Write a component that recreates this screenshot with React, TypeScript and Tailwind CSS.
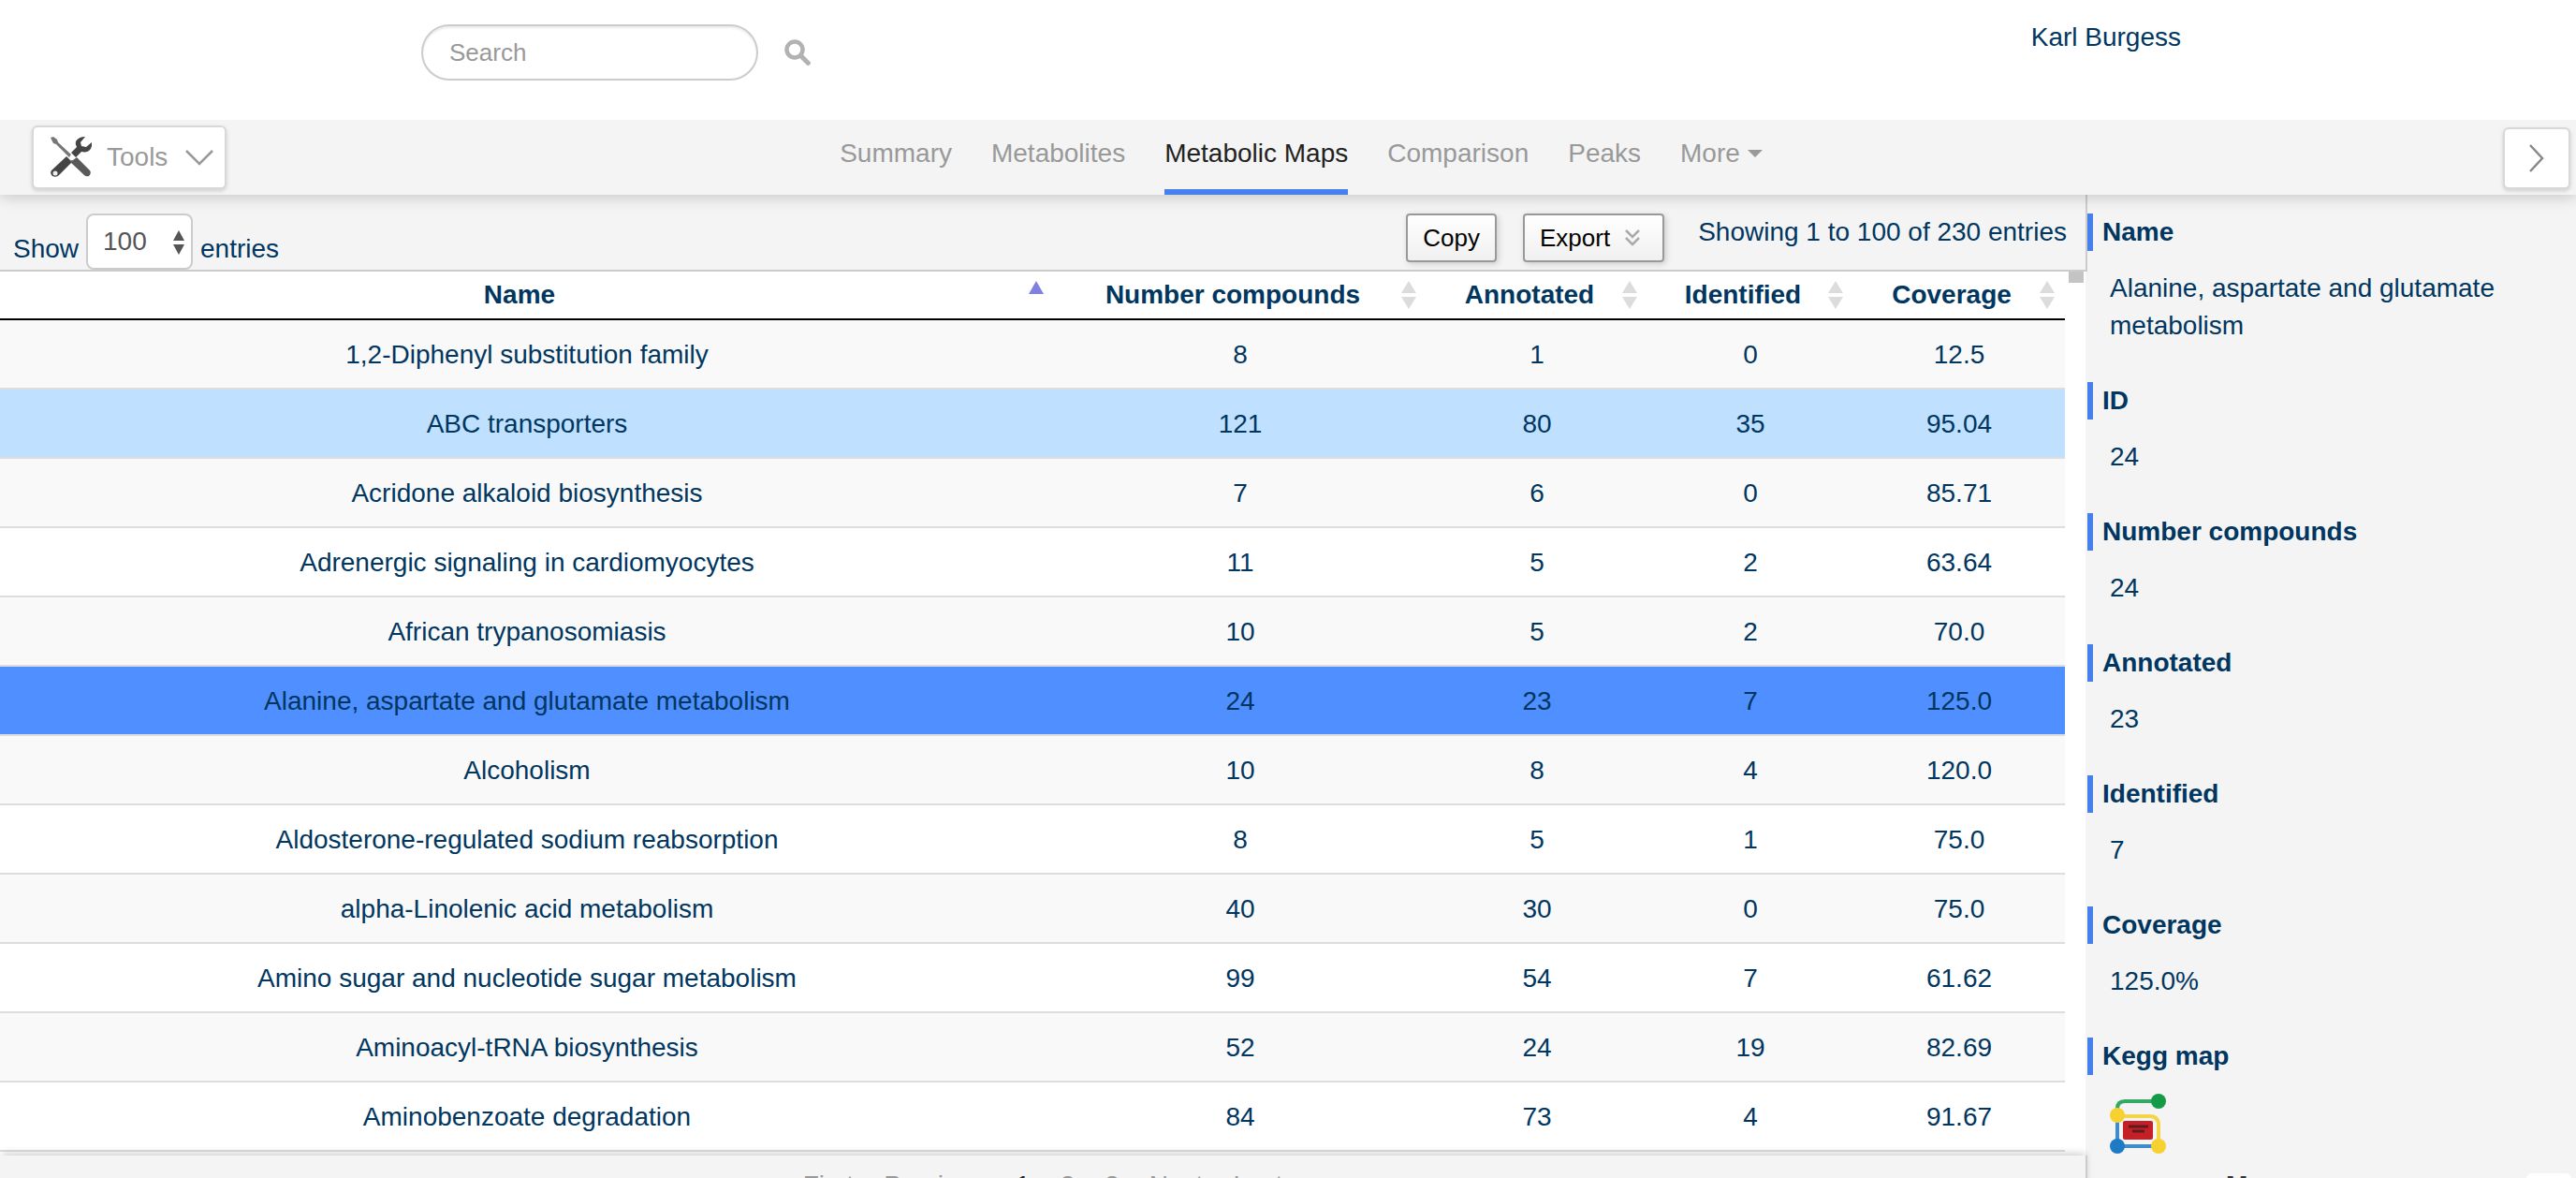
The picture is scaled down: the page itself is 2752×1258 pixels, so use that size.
import React from "react";

const rows: [string, string, string, string, string][] = [
  ["1,2-Diphenyl substitution family", "8", "1", "0", "12.5"],
  ["ABC transporters", "121", "80", "35", "95.04"],
  ["Acridone alkaloid biosynthesis", "7", "6", "0", "85.71"],
  ["Adrenergic signaling in cardiomyocytes", "11", "5", "2", "63.64"],
  ["African trypanosomiasis", "10", "5", "2", "70.0"],
  ["Alanine, aspartate and glutamate metabolism", "24", "23", "7", "125.0"],
  ["Alcoholism", "10", "8", "4", "120.0"],
  ["Aldosterone-regulated sodium reabsorption", "8", "5", "1", "75.0"],
  ["alpha-Linolenic acid metabolism", "40", "30", "0", "75.0"],
  ["Amino sugar and nucleotide sugar metabolism", "99", "54", "7", "61.62"],
  ["Aminoacyl-tRNA biosynthesis", "52", "24", "19", "82.69"],
  ["Aminobenzoate degradation", "84", "73", "4", "91.67"],
];

const details: [string, string][] = [
  ["Name", "Alanine, aspartate and glutamate metabolism"],
  ["ID", "24"],
  ["Number compounds", "24"],
  ["Annotated", "23"],
  ["Identified", "7"],
  ["Coverage", "125.0%"],
];

const pages = ["First", "Previous", "1", "2", "3", "Next", "Last"];

function rowColor(i: number) {
  if (i === 1) return "bg-[#bfe1ff]";
  if (i === 5) return "bg-[#508fff]";
  return i % 2 === 0 ? "bg-[#f9f9f9]" : "bg-white";
}

function ToolsIcon() {
  return (
    <svg className="shrink-0" width="44" height="44" viewBox="0 0 44 44" aria-hidden="true">
      <path d="M0 1 L3 0 L7 3 L8 6 L22 19 L20 22 L6 8 L3 7 Z" fill="#777" />
      <path d="M17 21 L23 27 L9 41 Q6 44 2 42 Q-1 39 1 36 Z" fill="#444" />
      <circle cx="5" cy="39" r="2.5" fill="#eee" />
      <path d="M24 25 L28 22 L42 36 Q44 39 41 42 Q38 43 36 41 L20 26 Z" fill="#5a5a5a" />
      <path d="M37 0 Q30 0 27 5 Q26 8 28 11 L22 17 L27 22 L33 16 Q42 18 44 10 V6 L38 11 L33 10 L32 6 Z" fill="#454545" />
    </svg>
  );
}

function KeggIcon() {
  return (
    <svg width="60" height="64" viewBox="0 0 60 64" aria-hidden="true">
      <g fill="none" strokeWidth="4">
        <path d="M8 22 V16 Q8 8 16 8 H50" stroke="#36a866" />
        <path d="M8 26 V56 H50" stroke="#3f8ccc" />
        <path d="M8 24 H43 Q52 24 52 34 V56" stroke="#f4d548" />
      </g>
      <circle cx="52" cy="8" r="8" fill="#159a48" />
      <circle cx="8" cy="23" r="8" fill="#f7d130" />
      <circle cx="8" cy="56" r="8" fill="#1f7ac4" />
      <circle cx="52" cy="56" r="8" fill="#f7d130" />
      <rect x="14" y="29" width="32" height="20" rx="2" fill="#c52026" />
      <path d="M20 35 H41 M24 40 H37" stroke="#5c1c1e" strokeWidth="3" />
    </svg>
  );
}

function SortIcon({ active }: { active?: boolean }) {
  return (
    <svg className="shrink-0" width="18" height="30" viewBox="0 0 18 30" aria-hidden="true">
      {active ? (
        <path d="M9 0 L17 14 H1 Z" fill="#8080e0" />
      ) : (
        <path d="M9 0 L17 13 H1 Z M1 17 H17 L9 30 Z" fill="#dcdcdc" />
      )}
    </svg>
  );
}

function HeadCell({ label, width, active }: { label: string; width: string; active?: boolean }) {
  return (
    <th className={`${width} h-[52px] border-b-2 border-black p-0 font-bold`} aria-sort={active ? "ascending" : "none"}>
      <button className="flex w-full items-center pr-[10px] pl-5">
        <span className="flex-1 pr-2 text-center">{label}</span>
        <SortIcon active={active} />
      </button>
    </th>
  );
}

const tab = "flex h-20 items-start border-b-[6px] border-transparent pt-4 hover:text-[#222]";
const plainButton =
  "flex h-[52px] items-center rounded-[4px] border-2 border-[#999] bg-linear-to-b from-white to-[#f0f0f0] px-4 text-[26px] leading-[36px] text-black shadow-[2px_2px_6px_#ccc]";
const sectionTitle = "border-l-[6px] border-[#4580ed] pl-[10px] font-bold";

export default function App() {
  return (
    <div className="flex h-screen flex-col overflow-hidden bg-white font-['Liberation_Sans',Arial,sans-serif] text-[28px] leading-[40px] text-[#003660]">
      <header className="relative z-20 flex h-32 shrink-0 items-start justify-between bg-white pr-[422px] pl-[450px]">
        <form className="mt-[26px] flex items-center gap-7">
          <input
            type="search"
            aria-label="Search"
            placeholder="Search"
            className="h-[60px] w-[360px] rounded-full border-2 border-[#ccc] px-7 text-[26px] shadow-[inset_0_2px_2px_rgba(0,0,0,0.075)] placeholder:text-[#999]"
          />
          <button type="button" aria-label="Run search">
            <svg width="28" height="28" viewBox="0 0 28 28" fill="none" stroke="#b2b2b2" aria-hidden="true">
              <circle cx="11" cy="11" r="8.5" strokeWidth="4.5" />
              <path d="M17 17 L27 27" strokeWidth="5" />
            </svg>
          </button>
        </form>
        <a href="#" className="mt-5">
          Karl Burgess
        </a>
      </header>

      <nav className="relative z-10 grid h-20 shrink-0 grid-cols-[1fr_auto_1fr] items-start bg-[#f4f4f4] pr-[6px] pl-[34px] text-[#999] shadow-[0_2px_16px_rgba(0,0,0,0.2)]">
        <button className="mt-[6px] flex h-[68px] w-[208px] items-center rounded-[6px] border-2 border-[#d8d8d8] bg-white pl-[18px] shadow-[0_2px_4px_rgba(0,0,0,0.15)]">
          <ToolsIcon />
          <span className="ml-4 flex-1 text-left">Tools</span>
          <svg className="mr-3" width="30" height="18" viewBox="0 0 30 18" fill="none" stroke="#999" strokeWidth="2.5" aria-hidden="true">
            <path d="M1 2 L15 16 L29 2" />
          </svg>
        </button>
        <div className="flex gap-[42px]">
          <a href="#" className={tab}>Summary</a>
          <a href="#" className={tab}>Metabolites</a>
          <a href="#" className="flex h-20 items-start border-b-[6px] border-[#4580ed] pt-4 text-[#222]">Metabolic Maps</a>
          <a href="#" className={tab}>Comparison</a>
          <a href="#" className={tab}>Peaks</a>
          <a href="#" className={tab}>
            More
            <svg className="mt-4 ml-2" width="16" height="8" viewBox="0 0 16 8" aria-hidden="true">
              <path d="M0 0 H16 L8 8 Z" fill="#999" />
            </svg>
          </a>
        </div>
        <button aria-label="Next" className="mt-2 flex h-[66px] w-[72px] items-center justify-center justify-self-end rounded-[6px] border-2 border-[#d8d8d8] bg-white shadow-[0_2px_4px_rgba(0,0,0,0.15)]">
          <svg width="16" height="30" viewBox="0 0 16 30" fill="none" stroke="#888" strokeWidth="2.5" aria-hidden="true">
            <path d="M1 1 L14 15 L1 29" />
          </svg>
        </button>
      </nav>

      <div className="flex min-h-0 flex-1">
        <main className="min-w-0 flex-1">
          <div className="relative -mr-[2px] flex h-[82px] items-start justify-between border-r-2 border-b-2 border-[#ccc] bg-[#f4f4f4] pr-5 pl-[14px]">
            <label className="flex items-start gap-2 pt-5">
              <span className="pt-[18px]">Show</span>
              <span className="relative">
                <select className="h-[60px] w-[114px] appearance-none rounded-[8px] border-2 border-[#ccc] bg-white pl-4 text-[28px] text-[#555]">
                  <option>100</option>
                </select>
                <svg className="pointer-events-none absolute top-[18px] right-2" width="14" height="26" viewBox="0 0 14 26" aria-hidden="true">
                  <path d="M7 0 L13 11 H1 Z M1 15 H13 L7 26 Z" fill="#555" />
                </svg>
              </span>
              <span className="pt-[18px]">entries</span>
            </label>
            <div className="flex items-start pt-5">
              <button className={plainButton}>Copy</button>
              <button className={`${plainButton} mr-9 ml-7`}>
                Export
                <svg className="mr-2 ml-4" width="16" height="18" viewBox="0 0 16 18" fill="none" stroke="#aaa" strokeWidth="2.5" aria-hidden="true">
                  <path d="M1 1 L8 8 L15 1 M1 9 L8 16 L15 9" />
                </svg>
              </button>
              <span>Showing 1 to 100 of 230 entries</span>
            </div>
          </div>
          <div className="flex items-start">
            <div className="min-w-0 flex-1">
              <table className="w-full table-fixed border-separate border-spacing-0">
                <thead>
                  <tr>
                    <HeadCell label="Name" width="w-auto" active />
                    <HeadCell label="Number compounds" width="w-[398px]" />
                    <HeadCell label="Annotated" width="w-[236px]" />
                    <HeadCell label="Identified" width="w-[220px]" />
                    <HeadCell label="Coverage" width="w-[226px]" />
                  </tr>
                </thead>
                <tbody>
                  {rows.map((r, i) => (
                    <tr key={r[0]} className={rowColor(i)}>
                      {r.map((c, j) => (
                        <td key={j} className="h-[74px] border-b-2 border-[#ddd] p-0 pt-[2px] text-center">
                          {c}
                        </td>
                      ))}
                    </tr>
                  ))}
                </tbody>
              </table>
            </div>
            <div className="flex w-[22px] justify-end pr-[2px]">
              <div className="h-3 w-4 bg-[#c4c4c4]" />
            </div>
          </div>
          <footer className="relative mt-1 -mr-[2px] flex h-20 justify-center gap-8 border-r-2 border-[#ccc] bg-[#f4f4f4] pt-3 text-[#999] shadow-[0_-4px_8px_-2px_rgba(0,0,0,0.2)]">
            {pages.map((p) => (
              <a key={p} href="#" className={p === "1" ? "text-[#222]" : "hover:text-[#222]"}>
                {p}
              </a>
            ))}
          </footer>
        </main>
        <aside className="w-[524px] shrink-0 bg-[#f4f4f4] pt-5 pl-[2px]">
          <dl>
            {details.map(([k, v]) => (
              <React.Fragment key={k}>
                <dt className={sectionTitle}>{k}</dt>
                <dd className="mt-5 mb-10 px-6">{v}</dd>
              </React.Fragment>
            ))}
          </dl>
          <h2 className={sectionTitle}>Kegg map</h2>
          <a href="#" aria-label="Open Kegg map" className="mt-5 ml-6 block w-[60px]">
            <KeggIcon />
          </a>
          <div className="mt-[14px] flex items-start justify-between pr-[5px] pl-[148px] font-bold text-[#333]">
            <span>More</span>
            <button aria-label="Open" className="mt-[7px] h-12 w-12 rounded-[6px] bg-white" />
          </div>
        </aside>
      </div>
    </div>
  );
}
